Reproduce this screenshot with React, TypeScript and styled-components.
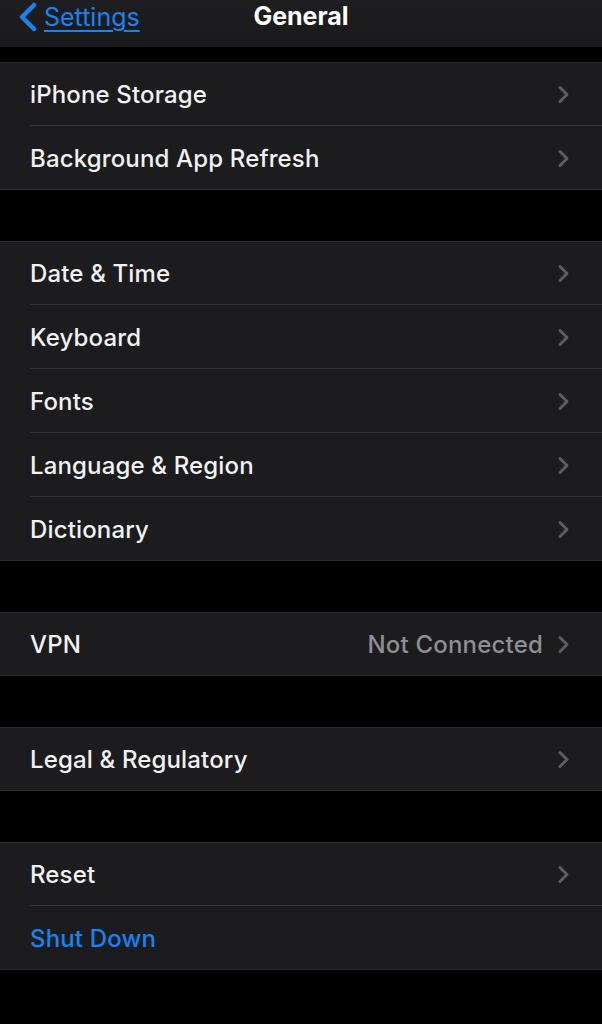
import React from "react";
import styled, { createGlobalStyle } from "styled-components";

const Global = createGlobalStyle`
  html, body { margin: 0; padding: 0; background: #000; }
  body { font-family: Inter, "Noto Sans", "Liberation Sans", sans-serif; -webkit-font-smoothing: antialiased; }
`;

const Page = styled.div`
  width: 602px;
  min-height: 1024px;
  background: #000;
  display: flex;
  flex-direction: column;
`;

const NavBar = styled.header`
  height: 47px;
  background: linear-gradient(#1e1e20, #1a1a1c);
  position: relative;
  display: flex;
  align-items: flex-start;
`;

const BackLink = styled.a`
  display: flex;
  align-items: center;
  gap: 6px;
  padding: 2px 0 0 18px;
  color: #1a82f0;
  text-decoration: underline;
  text-decoration-thickness: 2px;
  text-underline-offset: 4px;
  font-size: 25px;
  font-weight: 400;
  height: 30px;
`;

const Title = styled.h1`
  position: absolute;
  left: 0;
  right: 0;
  top: 0;
  margin: 0;
  text-align: center;
  color: #fff;
  font-size: 25px;
  font-weight: 700;
  line-height: 32px;
  pointer-events: none;
`;

const Sections = styled.main`
  display: flex;
  flex-direction: column;
  gap: 51px;
  padding-top: 15px;
`;

const Section = styled.section`
  background: #1c1c1e;
  box-shadow: inset 0 1px 0 #2b2b2e, inset 0 -1px 0 #2b2b2e;
  display: flex;
  flex-direction: column;
`;

const Row = styled.div<{ $last?: boolean }>`
  height: 64px;
  margin-left: 30px;
  padding-right: 32px;
  display: flex;
  align-items: center;
  box-shadow: ${(p) => (p.$last ? "none" : "inset 0 -1px 0 #333336")};
`;

const Label = styled.span<{ $accent?: boolean }>`
  flex: 1;
  font-size: 24px;
  font-weight: 500;
  letter-spacing: 0.15px;
  color: ${(p) => (p.$accent ? "#1a82f0" : "#f2f2f4")};
`;

const Value = styled.span`
  font-size: 24px;
  font-weight: 500;
  letter-spacing: 0.2px;
  color: #8e8e93;
  margin-right: 14px;
`;

const Chevron = () => (
  <svg width="13" height="19" viewBox="0 0 13 19" fill="none">
    <path d="M3 2.5 L10 9.5 L3 16.5" stroke="#5d5d62" strokeWidth="3" strokeLinecap="round" strokeLinejoin="round" />
  </svg>
);

const BackChevron = () => (
  <svg width="20" height="30" viewBox="0 0 20 30" fill="none">
    <path d="M16 3 L4 15 L16 27" stroke="#1a82f0" strokeWidth="4.5" strokeLinecap="round" strokeLinejoin="round" />
  </svg>
);

type Item = { label: string; value?: string; accent?: boolean; chevron?: boolean };

const groups: Item[][] = [
  [{ label: "iPhone Storage" }, { label: "Background App Refresh" }],
  [
    { label: "Date & Time" },
    { label: "Keyboard" },
    { label: "Fonts" },
    { label: "Language & Region" },
    { label: "Dictionary" },
  ],
  [{ label: "VPN", value: "Not Connected" }],
  [{ label: "Legal & Regulatory" }],
  [{ label: "Reset" }, { label: "Shut Down", accent: true, chevron: false }],
];

export default function App() {
  return (
    <Page>
      <Global />
      <NavBar>
        <BackLink>
          <BackChevron />
          Settings
        </BackLink>
        <Title>General</Title>
      </NavBar>
      <Sections>
        {groups.map((g, gi) => (
          <Section key={gi}>
            {g.map((it, i) => (
              <Row key={it.label} $last={i === g.length - 1}>
                <Label $accent={it.accent}>{it.label}</Label>
                {it.value && <Value>{it.value}</Value>}
                {it.chevron !== false && <Chevron />}
              </Row>
            ))}
          </Section>
        ))}
      </Sections>
    </Page>
  );
}
